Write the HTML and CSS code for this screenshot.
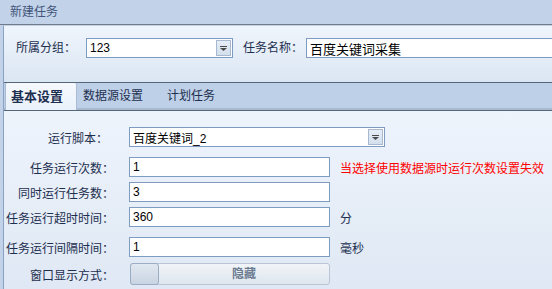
FILE: index.html
```html
<!DOCTYPE html>
<html lang="zh-CN">
<head>
    <meta charset="UTF-8">
    <title>新建任务</title>
    <link rel="stylesheet" href="styles.css">
</head>
<body>
    <div class="titlebar">新建任务</div>
    <div class="frame">
        <div class="group-panel">
            <span class="label">所属分组：</span>
            <div class="combo combo-group">
                <span>123</span>
                <span class="drop"><svg width="7" height="5" viewBox="0 0 7 5"><rect x="0" y="0" width="7" height="1" fill="#4a4a4a"/><path d="M0 2h7L3.5 5z" fill="#4a4a4a"/></svg></span>
            </div>
            <span class="label label-name">任务名称：</span>
            <div class="field field-name">百度关键词采集</div>
        </div>

        <div class="tabs">
            <div class="tab active">基本设置</div>
            <div class="tab">数据源设置</div>
            <div class="tab">计划任务</div>
        </div>

        <div class="tab-body">
            <div class="row">
                <span class="row-label short">运行脚本：</span>
                <div class="combo combo-script">
                    <span>百度关键词_2</span>
                    <span class="drop"><svg width="7" height="5" viewBox="0 0 7 5"><rect x="0" y="0" width="7" height="1" fill="#4a4a4a"/><path d="M0 2h7L3.5 5z" fill="#4a4a4a"/></svg></span>
                </div>
            </div>
            <div class="row gap-l">
                <span class="row-label">任务运行次数：</span>
                <div class="field">1</div>
                <span class="note">当选择使用数据源时运行次数设置失效</span>
            </div>
            <div class="row">
                <span class="row-label">同时运行任务数：</span>
                <div class="field">3</div>
            </div>
            <div class="row">
                <span class="row-label">任务运行超时时间：</span>
                <div class="field">360</div>
                <span class="unit">分</span>
            </div>
            <div class="row gap-l">
                <span class="row-label">任务运行间隔时间：</span>
                <div class="field">1</div>
                <span class="unit">毫秒</span>
            </div>
            <div class="row gap-m">
                <span class="row-label">窗口显示方式：</span>
                <div class="toggle">
                    <span class="knob"></span>
                    <span class="toggle-text">隐藏</span>
                </div>
            </div>
        </div>
    </div>
</body>
</html>
```

FILE: styles.css
```css
body {
    margin: 0;
    height: 289px;
    overflow: hidden;
    background: #c1d2e9;
    font-family: "Liberation Sans", "Noto Sans CJK SC", sans-serif;
    font-size: 12px;
    color: #1d2f4f;
}
.titlebar {
    height: 24px;
    line-height: 24px;
    padding-left: 10px;
    color: #43557a;
    border-bottom: 1px solid #6f7c8d;
}
.frame {
    margin-left: 3px;
    border-left: 1px solid #8aa1c1;
    border-top: 1px solid #c9d3df;
    height: 264px;
    overflow: hidden;
}
.group-panel {
    display: flex;
    align-items: flex-start;
    height: 56px;
    padding: 12px 0 0 12px;
    box-sizing: border-box;
    background: linear-gradient(to bottom, #eff5fc, #dbe6f3);
}
.group-panel > *, .row > * {
    flex-shrink: 0;
}
.label {
    line-height: 20px;
    width: 70px;
}
.label-name {
    width: 63px;
    margin-left: 10px;
}
.combo, .field {
    display: flex;
    align-items: center;
    height: 20px;
    box-sizing: border-box;
    border: 1px solid #7e9cc2;
    background: #fff;
    color: #000;
    padding-left: 3px;
    white-space: nowrap;
}
.combo span:first-child {
    flex: 1;
}
.combo-group {
    width: 147px;
}
.combo-script {
    width: 256px;
}
.field {
    width: 201px;
}
.field-name {
    width: 260px;
    font-size: 13px;
}
.drop {
    width: 13px;
    height: 14px;
    margin-right: 1px;
    border: 1px solid #a7b9d0;
    background: linear-gradient(to bottom, #e6edf6, #d4dfed);
    display: flex;
    align-items: center;
    justify-content: center;
}
.tabs {
    display: flex;
    height: 27px;
    border-top: 1px solid #56677c;
    border-bottom: 1px solid #55667b;
    background: linear-gradient(to bottom, #bdd0e7 0, #bdd0e7 25px, #a9b9ce 25px);
}
.tab {
    line-height: 27px;
    padding: 0 12px;
    color: #1d2f4f;
}
.tab.active {
    margin-left: 1px;
    padding: 0 13px 0 5px;
    font-size: 13px;
    font-weight: bold;
    background: linear-gradient(to bottom, #f5f9fe, #eaf1fa);
    border-left: 1px solid #aabcd3;
    border-right: 1px solid #aabcd3;
    border-radius: 2px 2px 0 0;
}
.tab.active + .tab {
    padding-left: 6px;
}
.tab-body {
    height: 178px;
    padding-top: 16px;
    box-sizing: border-box;
    background: linear-gradient(to bottom, #eef4fc, #dfe8f4);
}
.row {
    display: flex;
    align-items: center;
    height: 20px;
    margin-top: 5px;
}
.row:first-child {
    margin-top: 0;
}
.row.gap-l {
    margin-top: 10px;
}
.row.gap-m {
    margin-top: 7px;
}
.row-label {
    width: 110px;
    margin-right: 15px;
    text-align: right;
    white-space: nowrap;
}
.row-label.short {
    width: 104px;
    margin-right: 21px;
}
.note {
    margin-left: 10px;
    color: #ff0000;
    white-space: nowrap;
}
.unit {
    margin-left: 10px;
}
.toggle {
    display: flex;
    width: 200px;
    height: 22px;
    margin-left: 1px;
    box-sizing: border-box;
    border: 1px solid #bac6d5;
    border-radius: 3px;
    background: linear-gradient(to bottom, #f1f4f8, #dfe6ef);
}
.knob {
    width: 27px;
    margin: -1px 0 -1px -1px;
    border: 1px solid #9badc4;
    border-radius: 3px;
    background: linear-gradient(to bottom, #e1e8f1, #c9d4e2);
}
.toggle-text {
    flex: 1;
    text-align: center;
    line-height: 20px;
    font-weight: bold;
    color: #6b7b90;
}
```
